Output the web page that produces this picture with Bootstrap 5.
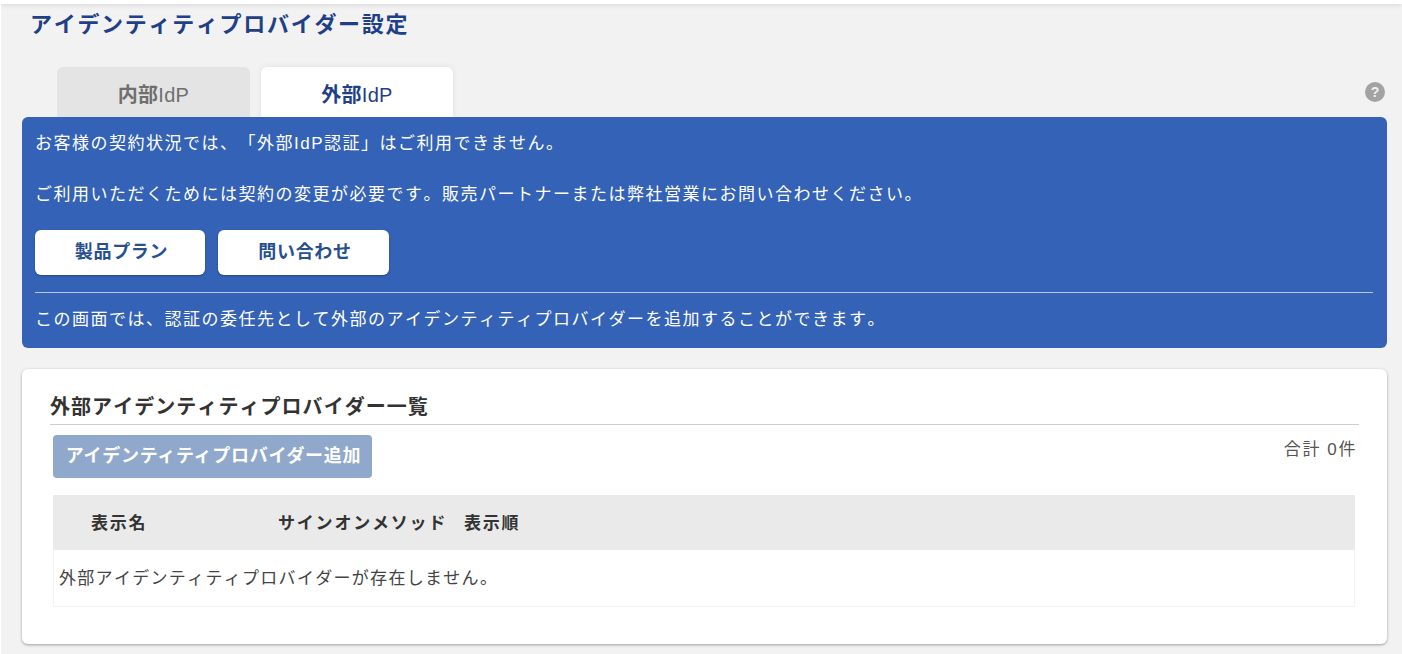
<!DOCTYPE html>
<html lang="ja"><head><meta charset="utf-8"><title>IdP</title>
<link rel="stylesheet" href="https://cdn.jsdelivr.net/npm/bootstrap@5.3.0/dist/css/bootstrap.min.css">
<style>
html,body{height:654px;overflow:hidden}
body{background:#f2f2f2;font-family:"Liberation Sans","Noto Sans CJK JP",sans-serif;color:#333;border-left:1px solid #fff;text-spacing-trim:space-all;font-kerning:none}
.topstrip{height:4px;background:#fff;box-shadow:0 1px 5px rgba(0,0,0,.12);margin-left:-1px}
.pagehead{margin:0;padding:6px 0 0 29px;height:63px;font-size:22px;line-height:30px;font-weight:700;color:#1f3f87;letter-spacing:1.7px}
.tabrow{padding:0 0 0 56px;height:50px;position:relative}
.idtab{width:193px;height:50px;border-radius:6px 6px 0 0;font-size:20px;font-weight:700;padding-top:13px;line-height:30px;text-align:center;background:#e4e4e4;color:#6f6f6f;letter-spacing:.3px}
.idtab span{font-weight:400}
.idtab.on{background:#fff;color:#1f3f87;box-shadow:0 0 6px rgba(0,0,0,.08);margin-left:3px;width:192px}
.helpdot{position:absolute;right:17px;top:15px;width:20px;height:20px}
.bluebox{margin:0 15px 0 21px;height:231px;background:#3462b6;border-radius:6px;color:#fff;padding:15px 14px 0 13px;font-size:17px;letter-spacing:1.5px;position:relative}
.bluebox p{margin:0;line-height:24px}
.bluebox p+p{margin-top:27px}
.btnwhite{background:#fff;color:#27508f;font-weight:700;font-size:18px;height:45px;border-radius:6px;border:0;padding:0 0 0 3px;letter-spacing:.7px;box-shadow:0 1px 2px rgba(0,0,0,.3)}
.bluebox .gap-2{margin-top:23px!important}
.btnplan{width:170px}.btnask{width:171px;margin-left:5px}
.bluebox hr{margin:17px 0 15px;border-color:#b8c6e2;opacity:1}
.listcard{margin:21px 15px 0 21px;height:275px;background:#fff;border-radius:6px;box-shadow:0 1px 3px rgba(0,0,0,.35);padding:21px 28px 0 28px}
.listhead{margin:0;font-size:20px;font-weight:700;color:#333;letter-spacing:1.05px;line-height:34px;border-bottom:1px solid #c9ced4;height:35px}
.addbtn{background:#8fa8cb;color:#fff;font-weight:700;font-size:18px;height:43px;width:319px;padding:0 0 0 2px;border:0;border-radius:4px;margin:10px 0 0 3px;letter-spacing:.7px}
.tot{font-size:17px;color:#555;margin-top:12px;margin-right:2px;letter-spacing:1.6px}
.gridtable{margin:17px 4px 0 3px;width:auto;border:1px solid #f4f4f4}
.gridhead{background:#eaeaea;height:55px;font-size:17px;font-weight:700;letter-spacing:1.8px;line-height:57px;margin:-1px -1px 0}
.gridbody{height:56px;padding-left:5px;line-height:57px;font-size:17px;letter-spacing:1.3px;color:#444}
.c1{width:225px;padding-left:38px}.c2{width:186px}
</style></head><body>
<div class="topstrip"></div>
<h1 class="pagehead">アイデンティティプロバイダー設定</h1>
<div class="tabrow d-flex gap-2 border-0">
<div class="idtab">内部<span>IdP</span></div><div class="idtab on">外部<span>IdP</span></div>
<svg class="helpdot" viewBox="0 0 20 20"><circle cx="10" cy="10" r="10" fill="#a3a3a3"/><text x="10" y="15" text-anchor="middle" font-size="14" font-weight="700" fill="#f2f2f2" font-family="Liberation Sans">?</text></svg>
</div>
<div class="bluebox">
<p>お客様の契約状況では、「外部IdP認証」はご利用できません。</p>
<p>ご利用いただくためには契約の変更が必要です。販売パートナーまたは弊社営業にお問い合わせください。</p>
<div class="d-flex gap-2"><button class="btnwhite btnplan">製品プラン</button><button class="btnwhite btnask">問い合わせ</button></div>
<hr>
<p>この画面では、認証の委任先として外部のアイデンティティプロバイダーを追加することができます。</p>
</div>
<div class="listcard">
<h2 class="listhead">外部アイデンティティプロバイダー一覧</h2>
<div class="d-flex justify-content-between align-items-start"><button class="addbtn">アイデンティティプロバイダー追加</button><div class="tot">合計 0件</div></div>
<div class="gridtable">
<div class="gridhead d-flex"><div class="c1">表示名</div><div class="c2">サインオンメソッド</div><div>表示順</div></div>
<div class="gridbody">外部アイデンティティプロバイダーが存在しません。</div>
</div>
</div>
<script src="https://cdn.jsdelivr.net/npm/bootstrap@5.3.0/dist/js/bootstrap.bundle.min.js"></script>
</body></html>
